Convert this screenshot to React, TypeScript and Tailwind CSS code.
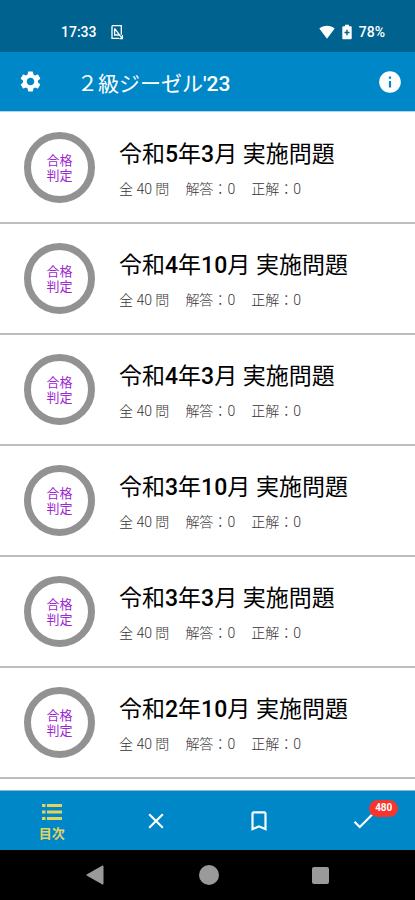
import React from "react";
import { MdBookmarkBorder, MdCheck, MdClose, MdInfo, MdSettings } from "react-icons/md";

type Exam = { title: string; total: number; answered: number; correct: number };

const exams: Exam[] = [
  { title: "令和5年3月 実施問題", total: 40, answered: 0, correct: 0 },
  { title: "令和4年10月 実施問題", total: 40, answered: 0, correct: 0 },
  { title: "令和4年3月 実施問題", total: 40, answered: 0, correct: 0 },
  { title: "令和3年10月 実施問題", total: 40, answered: 0, correct: 0 },
  { title: "令和3年3月 実施問題", total: 40, answered: 0, correct: 0 },
  { title: "令和2年10月 実施問題", total: 40, answered: 0, correct: 0 },
];

/** Sets digits in medium weight and leaves the Japanese text regular. */
function Title({ text }: { text: string }) {
  return (
    <>
      {text.split(/('?[0-9]+)/).map((part, i) =>
        i % 2 === 1 ? (
          <span key={i} className="font-medium">
            {part}
          </span>
        ) : (
          part
        ),
      )}
    </>
  );
}

function StatusBar() {
  return (
    <div className="flex h-[52px] shrink-0 items-center justify-between bg-[#00628f] pt-3 pr-[30px] pl-[61px] text-sm font-medium text-white">
      <div className="flex items-center gap-3">
        <span>17:33</span>
        <svg className="h-4 w-4" viewBox="0 0 16 16" fill="none" stroke="currentColor" strokeWidth="1.3" aria-hidden="true">
          <path d="M3 1.700h9.300v9M3 1.700v12.600h7M5.600 4.400l7.600 10.200M5.600 4.400v6.600h4.400M13.400 11v3.600h-3" />
        </svg>
      </div>
      <div className="flex items-center gap-1">
        <svg className="h-4 w-4" viewBox="0 0 16 16" fill="currentColor" aria-hidden="true">
          <path d="M8 14.800.3 4.600C4.600.9 11.400.9 15.700 4.600z" />
        </svg>
        <svg className="h-4 w-4" viewBox="0 0 16 16" aria-hidden="true">
          <path fill="currentColor" d="M6 .8h4v1.500h1.800q.9 0 .9.9v11.100q0 .9-.9.9H4.200q-.9 0-.9-.9V3.200q0-.9.9-.9H6z" />
          <path stroke="#00628f" strokeWidth="1.400" d="M8 5.800v5.400M5.500 8.500h5" />
        </svg>
        <span>78%</span>
      </div>
    </div>
  );
}

function ExamRow({ exam }: { exam: Exam }) {
  return (
    <li className="border-b-2 border-[#bdbdbd]">
      <button type="button" className="flex h-[109px] w-full items-center gap-6 pl-6 text-left">
        <span className="flex h-[71px] w-[71px] shrink-0 items-center justify-center rounded-full border-[7px] border-[#929292] text-center text-[13px] leading-[15px] text-[#9c27d0]">
          合格
          <br />
          判定
        </span>
        <span className="flex flex-col gap-2 pt-0.5">
          <span className="text-[23px] leading-8 text-black">
            <Title text={exam.title} />
          </span>
          <span className="flex gap-4 text-sm leading-5 font-light text-[#333333]">
            <span>全 {exam.total} 問</span>
            <span>解答：{exam.answered}</span>
            <span>正解：{exam.correct}</span>
          </span>
        </span>
      </button>
    </li>
  );
}

export default function App() {
  return (
    <div className="flex h-screen flex-col overflow-hidden bg-white font-['Roboto','Noto_Sans_CJK_JP',sans-serif]">
      <StatusBar />
      <header className="flex h-[60px] shrink-0 items-center border-b border-[#b5d6e8] bg-[#0087c8] px-3 text-white">
        <button type="button" aria-label="設定" className="px-1.5">
          <MdSettings size={25} />
        </button>
        <h1 className="ml-7 flex-1 pt-1 text-[21px] leading-7 font-normal">
          <Title text="２級ジーゼル'23" />
        </h1>
        <button type="button" aria-label="情報">
          <MdInfo size={26} />
        </button>
      </header>

      <main className="min-h-0 flex-1 overflow-hidden pt-px">
        <ul>
          {exams.map((exam) => (
            <ExamRow key={exam.title} exam={exam} />
          ))}
        </ul>
      </main>

      <nav className="grid h-[60px] shrink-0 grid-cols-4 border-t border-[#8fb9cd] bg-[#0087c8] text-white">
        <button type="button" className="flex flex-col items-center justify-center gap-1 pt-0.5 text-[#e3d45e]">
          <svg className="h-5 w-5" viewBox="0 0 20 20" fill="currentColor" aria-hidden="true">
            <path d="M0 2h3.500v3H0zM5 2h15v3H5zM0 8.500h3.500v3H0zM5 8.500h15v3H5zM0 15h3.500v3H0zM5 15h15v3H5z" />
          </svg>
          <span className="text-[13px] leading-4 font-bold">目次</span>
        </button>
        <button type="button" aria-label="不正解" className="flex items-center justify-center">
          <MdClose size={26} />
        </button>
        <button type="button" aria-label="ブックマーク" className="flex items-center justify-center">
          <MdBookmarkBorder size={26} />
        </button>
        <button type="button" className="flex items-center justify-center" aria-label="正解 480">
          <span className="relative">
            <MdCheck size={26} />
            <span className="absolute -top-2 left-[19px] flex h-[17px] items-center rounded-full bg-[#f8342c] px-1.5 text-[10px] leading-none font-bold">
              480
            </span>
          </span>
        </button>
      </nav>

      <div className="flex h-[50px] shrink-0 items-center justify-around bg-black px-10 text-[#9a9a9a]">
        <button type="button" aria-label="戻る">
          <svg className="h-5 w-5" viewBox="0 0 20 20" fill="currentColor" aria-hidden="true">
            <path d="M1 9.200 16 .8q1.500-.7 1.500 1v16.400q0 1.700-1.500 1L1 10.800q-1.200-.8 0-1.600z" />
          </svg>
        </button>
        <button type="button" aria-label="ホーム" className="h-5 w-5 rounded-full bg-current" />
        <button type="button" aria-label="履歴" className="h-[17px] w-[17px] rounded-xs bg-current" />
      </div>
    </div>
  );
}
